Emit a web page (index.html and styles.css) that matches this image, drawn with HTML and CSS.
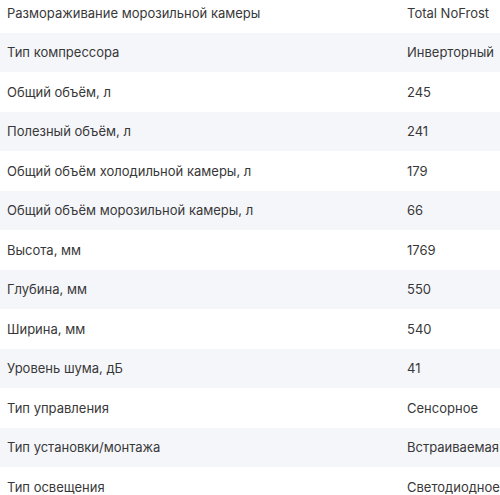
FILE: index.html
```html
<!DOCTYPE html>
<html lang="ru">
<head>
<meta charset="utf-8">
<link rel="stylesheet" href="styles.css">
</head>
<body>
<div class="specs">
  <div class="row"><span class="name">Размораживание морозильной камеры</span><span class="val">Total NoFrost</span></div>
  <div class="row"><span class="name">Тип компрессора</span><span class="val">Инверторный</span></div>
  <div class="row"><span class="name">Общий объём, л</span><span class="val">245</span></div>
  <div class="row"><span class="name">Полезный объём, л</span><span class="val">241</span></div>
  <div class="row"><span class="name">Общий объём холодильной камеры, л</span><span class="val">179</span></div>
  <div class="row"><span class="name">Общий объём морозильной камеры, л</span><span class="val">66</span></div>
  <div class="row"><span class="name">Высота, мм</span><span class="val">1769</span></div>
  <div class="row"><span class="name">Глубина, мм</span><span class="val">550</span></div>
  <div class="row"><span class="name">Ширина, мм</span><span class="val">540</span></div>
  <div class="row"><span class="name">Уровень шума, дБ</span><span class="val">41</span></div>
  <div class="row"><span class="name">Тип управления</span><span class="val">Сенсорное</span></div>
  <div class="row"><span class="name">Тип установки/монтажа</span><span class="val">Встраиваемая</span></div>
  <div class="row"><span class="name">Тип освещения</span><span class="val">Светодиодное</span></div>
</div>
</body>
</html>
```
FILE: styles.css
```css
html, body {
  margin: 0;
  padding: 0;
  background: #ffffff;
}
body {
  font-family: Inter, "Noto Sans", sans-serif;
  font-size: 13px;
  color: #383838;
  overflow: hidden;
}
.specs {
  margin-top: -7px;
}
.row {
  display: grid;
  grid-template-columns: 400px 1fr;
  align-items: center;
  height: 39.5px;
  padding-left: 7px;
}
.row:nth-child(even) {
  background: #f5f6fa;
}
.name, .val {
  white-space: nowrap;
}
```
